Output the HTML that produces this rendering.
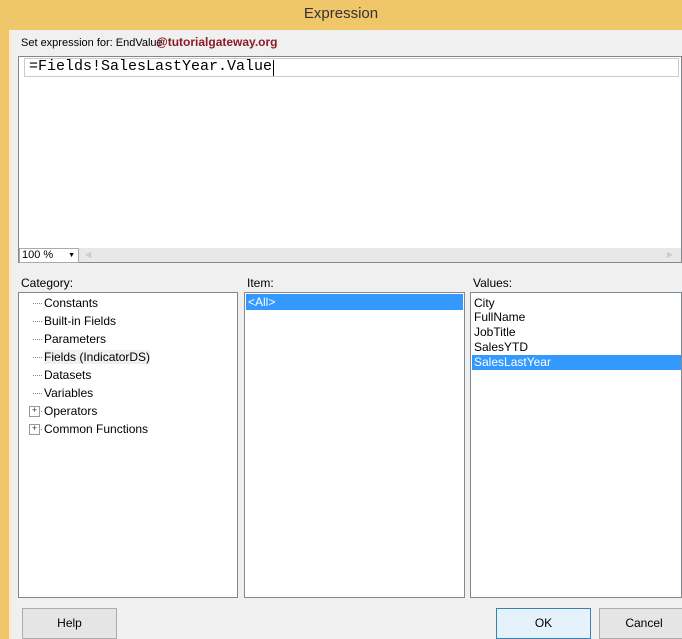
<!DOCTYPE html>
<html><head><style>
*{margin:0;padding:0;box-sizing:border-box}
body{width:682px;height:639px;overflow:hidden;background:#f0f0f0;font-family:"Liberation Sans",sans-serif;font-size:12px;color:#000;position:relative}
.a{position:absolute}
.box{position:absolute;background:#fff;border:1px solid #828790}
.lst div{height:18px;line-height:18px;padding-left:2px}
.sel{background:#3399ff;color:#fff}
.btn{position:absolute;background:#e5e5e5;border:1px solid #acacac;text-align:center;line-height:29px;font-size:12px}
.tree div{position:relative;height:18px;line-height:18px;padding-left:25px}
.tree div:before{content:"";position:absolute;left:14px;top:9px;width:9px;border-top:1px dotted #888}
.tree .ex:after{content:"+";position:absolute;left:10px;top:4px;width:9px;height:9px;border:1px solid #999;background:#fff;font-size:9px;line-height:7px;text-align:center;color:#333}
</style></head><body>
<div class="a" style="left:0;top:0;width:682px;height:30px;background:#efc669"></div>
<div class="a" style="left:0;top:0;width:9px;height:639px;background:#efc669"></div>
<div class="a" style="left:9px;top:30px;width:3px;height:609px;background:#f7ecd0"></div>
<div class="a" style="left:0;top:5px;width:682px;text-align:center;font-size:15px;color:#333">Expression</div>
<div class="a" style="left:21px;top:37px;font-size:11px">Set expression for: EndValue</div>
<div class="a" style="left:156px;top:35px;font-size:12px;font-weight:bold;color:#8b1a2a">@tutorialgateway.org</div>
<div class="box" style="left:18px;top:56px;width:664px;height:207px"></div>
<div class="a" style="left:24px;top:58px;width:655px;height:19px;border:1px solid #ccc;background:#fff"></div>
<div class="a" style="left:29px;top:58px;font-family:'Liberation Mono',monospace;font-size:15px">=Fields!SalesLastYear.Value</div>
<div class="a" style="left:273px;top:60px;width:1px;height:16px;background:#000"></div>
<div class="a" style="left:19px;top:248px;width:662px;height:14px;background:#e8e8e8"></div>
<div class="a" style="left:19px;top:248px;width:60px;height:15px;background:#fff;border:1px solid #aaa;font-size:11px;line-height:13px;padding-left:2px">100 %<span style="position:absolute;right:3px;font-size:7px">▼</span></div>
<div class="a" style="left:85px;top:250px;font-size:8px;color:#ccc">◀</div>
<div class="a" style="left:667px;top:250px;font-size:8px;color:#ccc">▶</div>
<div class="a" style="left:21px;top:276px">Category:</div>
<div class="a" style="left:247px;top:276px">Item:</div>
<div class="a" style="left:473px;top:276px">Values:</div>
<div class="box tree" style="left:18px;top:292px;width:220px;height:306px;padding-top:1px">
<div>Constants</div><div>Built-in Fields</div><div>Parameters</div><div><span style="background:#f0f0f0">Fields (IndicatorDS)</span></div><div>Datasets</div><div>Variables</div><div class="ex">Operators</div><div class="ex">Common Functions</div>
</div>
<div class="box lst" style="left:244px;top:292px;width:221px;height:306px;padding:1px"><div class="sel" style="height:16px;line-height:16px">&lt;All&gt;</div></div>
<div class="box lst" style="left:470px;top:292px;width:212px;height:306px;padding:2px 0 0 1px">
<div style="height:15px;line-height:17px">City</div><div style="height:15px;line-height:15px">FullName</div><div style="height:15px;line-height:15px">JobTitle</div><div style="height:15px;line-height:15px">SalesYTD</div><div class="sel" style="height:15px;line-height:15px">SalesLastYear</div>
</div>
<div class="btn" style="left:22px;top:608px;width:95px;height:31px">Help</div>
<div class="btn" style="left:496px;top:608px;width:95px;height:31px;border-color:#3c7fb1;background:#e5f1fb">OK</div>
<div class="btn" style="left:599px;top:608px;width:90px;height:31px">Cancel</div>
</body></html>
